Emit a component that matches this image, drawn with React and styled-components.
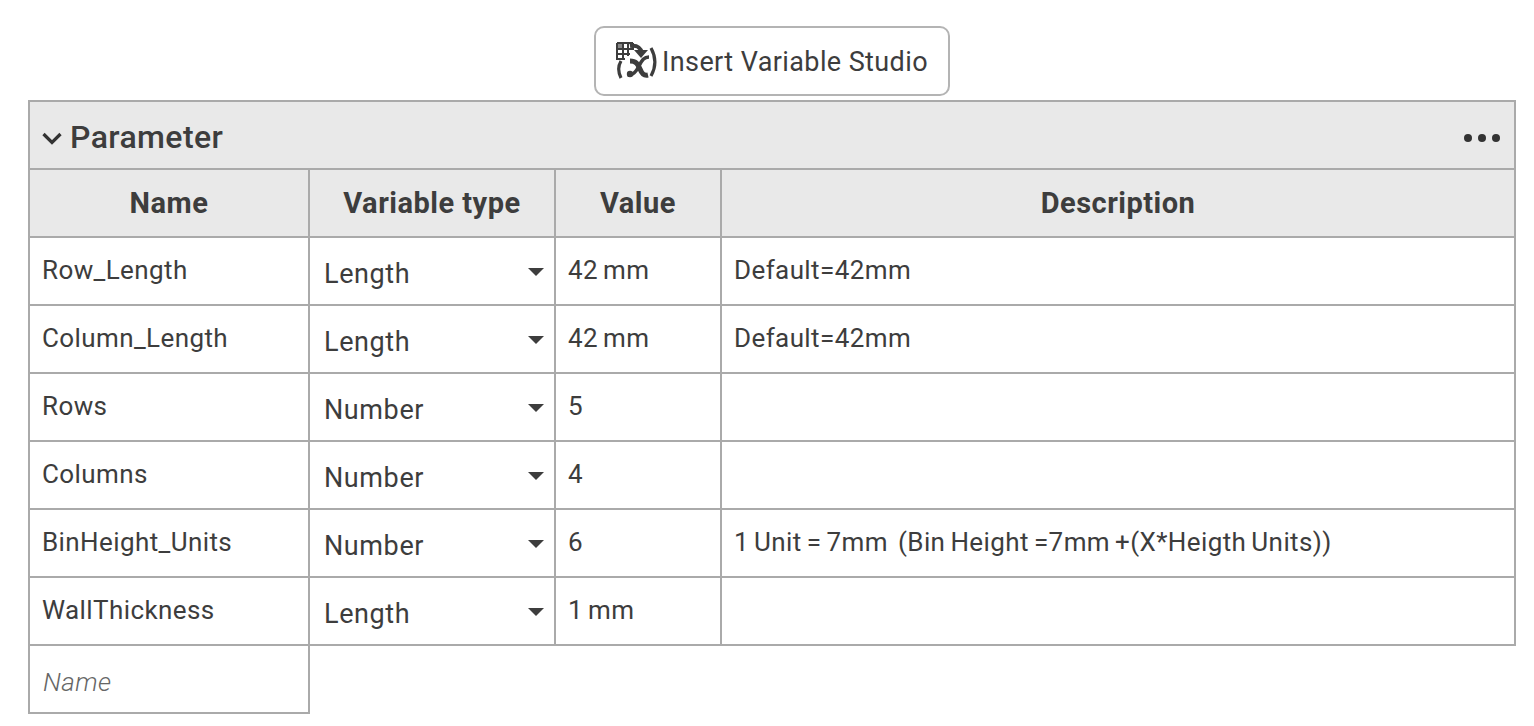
import React from "react";
import styled, { createGlobalStyle } from "styled-components";

const GlobalStyle = createGlobalStyle`
  html, body {
    margin: 0;
    background: #fff;
    font-family: "Roboto", "Liberation Sans", sans-serif;
    color: #3d3d3d;
  }
`;

const Page = styled.div`
  display: flex;
  flex-direction: column;
  padding: 26px 18px 0 28px;
  gap: 4px;
`;

const Toolbar = styled.div`
  display: flex;
  justify-content: center;
`;

const InsertButton = styled.button`
  display: flex;
  align-items: center;
  gap: 3px;
  width: 356px;
  height: 70px;
  padding: 0 0 0 19px;
  border: 2px solid #b4b4b4;
  border-radius: 10px;
  background: #fff;
  font: inherit;
  font-size: 27px;
  letter-spacing: 0.4px;
  color: #3d3d3d;
`;

const ButtonLabel = styled.span`
  padding-top: 2px;
`;

const Panel = styled.div`
  display: flex;
  flex-direction: column;
`;

const PanelHeader = styled.div`
  display: flex;
  align-items: center;
  justify-content: space-between;
  box-sizing: border-box;
  height: 68px;
  padding: 4px 14px 0 12px;
  background: #e9e9e9;
  border: 2px solid #aaa;
  border-bottom: 0;
`;

const PanelTitle = styled.div`
  display: flex;
  align-items: center;
  gap: 8px;
  font-size: 32px;
  font-weight: 500;
  letter-spacing: 0.4px;
`;

const Row = styled.div`
  display: grid;
  grid-template-columns: 282px 246px 166px 1fr;
  height: ${({ $head }) => ($head ? 70 : 68)}px;
`;

const Cell = styled.div`
  display: flex;
  align-items: center;
  box-sizing: border-box;
  min-width: 0;
  padding: 0 0 2px 12px;
  border-right: 2px solid #aaa;
  border-bottom: 2px solid #aaa;
  background: #fff;
  font-size: 26px;
  letter-spacing: 0.4px;
  word-spacing: -1.8px;
  white-space: pre;

  &:first-child {
    border-left: 2px solid #aaa;
  }
`;

const HeadCell = styled(Cell)`
  justify-content: center;
  padding: 0;
  border-top: 2px solid #aaa;
  background: #e9e9e9;
  font-size: 29px;
  font-weight: 700;
  letter-spacing: 0.5px;
  word-spacing: 0;
`;

const TypeCell = styled(Cell)`
  justify-content: space-between;
  padding: 6px 10px 0 14px;
  font-size: 27px;
  letter-spacing: 0.6px;
`;

const Caret = styled.span`
  width: 0;
  height: 0;
  margin-bottom: 4px;
  border-left: 8px solid transparent;
  border-right: 8px solid transparent;
  border-top: 8px solid #3d3d3d;
`;

const Dots = styled.div`
  display: flex;
  gap: 6px;
  margin-top: 2px;
`;

const Dot = styled.span`
  width: 8px;
  height: 8px;
  border-radius: 50%;
  background: #333;
`;

const Placeholder = styled(Cell)`
  padding: 6px 0 0 13px;
  font-size: 26px;
  font-style: italic;
  font-weight: 300;
  color: #666;
`;

const VariableIcon = () => (
  <svg width="44" height="44" viewBox="0 0 44 44" fill="none">
    <rect x="2" y="4" width="6" height="6" fill="#8a8a8a" />
    <path d="M2 4h16M2 10h16M2 15h13M2 20h8M2 4v17M8 4v17M13 4v13M18 4v7" stroke="#3d3d3d" strokeWidth="2" />
    <path d="M6 22c-3 5-3 11 0 17M36 9c5 9 5 19 0 28" stroke="#3d3d3d" strokeWidth="3.200" />
    <path d="M15 7c6-1 10 0 12 7" stroke="#3d3d3d" strokeWidth="4" />
    <path d="M19 11l7 8 7-8z" fill="#3d3d3d" />
    <path d="M15 22c6 0 8 3 10 8 2 5 4 7 8 6" stroke="#3d3d3d" strokeWidth="5" />
    <path d="M13 36c5 1 8-3 11-9 3-6 5-9 10-9" stroke="#3d3d3d" strokeWidth="3.500" />
    <circle cx="15" cy="35" r="3.200" fill="#3d3d3d" />
  </svg>
);

const Chevron = () => (
  <svg width="20" height="14" viewBox="0 0 20 14" fill="none" style={{ marginTop: 3 }}>
    <path d="M1.500 2 10 10.500 18.500 2" stroke="#333" strokeWidth="3.200" />
  </svg>
);

const columns = ["Name", "Variable type", "Value", "Description"];

const variables = [
  ["Row_Length", "Length", "42 mm", "Default=42mm"],
  ["Column_Length", "Length", "42 mm", "Default=42mm"],
  ["Rows", "Number", "5", ""],
  ["Columns", "Number", "4", ""],
  ["BinHeight_Units", "Number", "6", "1 Unit = 7mm  (Bin Height =7mm +(X*Heigth Units))"],
  ["WallThickness", "Length", "1 mm", ""],
];

export default function App() {
  return (
    <>
      <GlobalStyle />
      <Page>
        <Toolbar>
          <InsertButton>
            <VariableIcon />
            <ButtonLabel>Insert Variable Studio</ButtonLabel>
          </InsertButton>
        </Toolbar>
        <Panel>
          <PanelHeader>
            <PanelTitle>
              <Chevron />
              Parameter
            </PanelTitle>
            <Dots>
              <Dot />
              <Dot />
              <Dot />
            </Dots>
          </PanelHeader>
          <Row $head>
            {columns.map((label) => (
              <HeadCell key={label}>{label}</HeadCell>
            ))}
          </Row>
          {variables.map(([name, type, value, description]) => (
            <Row key={name}>
              <Cell>{name}</Cell>
              <TypeCell>
                {type}
                <Caret />
              </TypeCell>
              <Cell>{value}</Cell>
              <Cell>{description}</Cell>
            </Row>
          ))}
          <Row>
            <Placeholder>Name</Placeholder>
          </Row>
        </Panel>
      </Page>
    </>
  );
}
